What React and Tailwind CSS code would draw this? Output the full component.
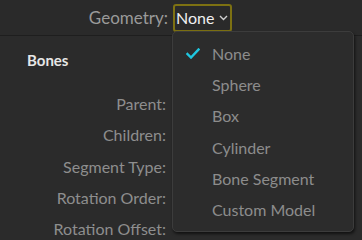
import React from 'react';

const options = ['None', 'Sphere', 'Box', 'Cylinder', 'Bone Segment', 'Custom Model'];
const fields = ['Parent:', 'Children:', 'Segment Type:', 'Rotation Order:', 'Rotation Offset:'];

function App() {
  return (
    <div className="relative w-[362px] h-[240px] overflow-hidden bg-[#2b2b2b] text-[16px]" style={{ fontFamily: 'Lato, "Open Sans", sans-serif' }}>
      {/* top row */}
      <div className="h-[36px] bg-[#2a2a2a] border-b border-[#1e1e1e] flex items-center">
        <div className="w-[168px] text-right text-[17px] text-[#9a9a9a]">Geometry:</div>
        <div className="ml-[5px] h-[28px] w-[59px] border-2 border-[#7d7112] rounded-[3px] flex items-center pl-[1px] text-[#f0f0f0] gap-[5px]">
          <span>None</span>
          <svg width="9" height="6" viewBox="0 0 9 6" fill="none" stroke="#d0d0d0" strokeWidth="1.4">
            <path d="M1 1l3.5 3.5L8 1" />
          </svg>
        </div>
      </div>

      {/* panel */}
      <div className="pl-[27px] pt-[14px]">
        <div className="text-[15px] font-bold text-[#e6e6e6] leading-[20px]">Bones</div>
        <div className="mt-[18px] w-[139px] flex flex-col">
          {fields.map((f) => (
            <div key={f} className="h-[31.25px] leading-[31px] text-right text-[#8e8e8e] whitespace-nowrap">{f}</div>
          ))}
        </div>
      </div>

      {/* dropdown menu */}
      <div className="absolute left-[172px] top-[31px] w-[182px] h-[201px] bg-[#2c2c2c] border border-[#3c3c3c] rounded-[5px] shadow-[1px_2px_3px_rgba(0,0,0,0.6)] pt-[6px]">
        {options.map((o, i) => (
          <div key={o} className="h-[31.3px] flex items-center">
            <div className="w-[39px] flex justify-end pr-[12px]">
              {i === 0 && (
                <svg width="14" height="11" viewBox="0 0 14 11" fill="none" stroke="#1fc7e0" strokeWidth="2.4" strokeLinecap="square">
                  <path d="M1.5 6l3.5 3.5L12.5 1.5" />
                </svg>
              )}
            </div>
            <span className="text-[#8c8c8c]">{o}</span>
          </div>
        ))}
      </div>
    </div>
  );
}

export default App;
